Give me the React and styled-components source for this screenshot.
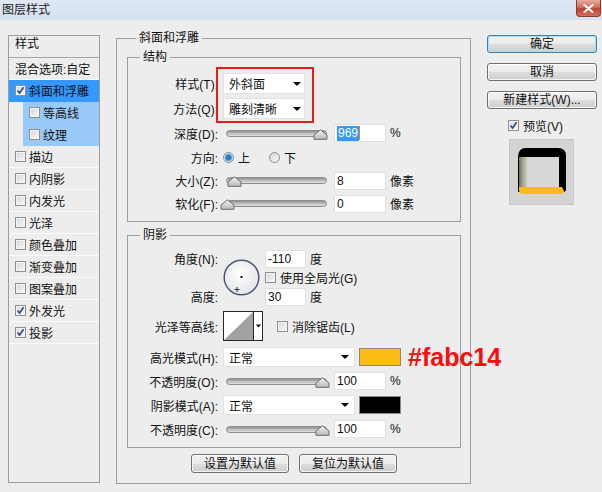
import React from 'react'
import styled, { createGlobalStyle } from 'styled-components'

const GlobalStyle = createGlobalStyle`
  html, body { margin: 0; padding: 0; background: #ededed; }
  body {
    font-family: "Liberation Sans", "Noto Sans CJK SC", sans-serif;
    font-size: 12px;
    color: #111;
  }
  * { box-sizing: border-box; }
`

const Window = styled.div`
  width: 602px;
  height: 492px;
  overflow: hidden;
  background: #ededed;
  display: flex;
  flex-direction: column;
`

const TitleBar = styled.div`
  height: 20px;
  flex: none;
  display: flex;
  justify-content: space-between;
  align-items: flex-start;
  background: linear-gradient(#dfe8f4, #d5e1ef);
`

const Title = styled.span`
  padding: 3px 0 0 2px;
  line-height: 14px;
  font-size: 12px;
  color: #1a1a1a;
`

const CloseButton = styled.div`
  width: 25px;
  height: 17px;
  margin-right: 1px;
  border: 1px solid #8b3b33;
  border-top: none;
  border-radius: 0 0 4px 4px;
  background: linear-gradient(#e9ab9e, #d26c5d 45%, #c1402f 55%, #d46d5c);
  display: flex;
  align-items: center;
  justify-content: center;
`

const Body = styled.div`
  flex: 1;
  display: flex;
  align-items: flex-start;
  gap: 16px;
  padding: 11px 0 0 8px;
`

// ---- left list of styles
const StyleList = styled.div`
  width: 92px;
  height: 448px;
  margin-top: 4px;
  border: 1px solid #9c9c9c;
  display: flex;
  flex-direction: column;
`

const ListHead = styled.div`
  height: 22px;
  padding: 1px 0 0 6px;
  line-height: 15px;
  border-bottom: 1px solid #a6a6a6;
`

const ListItem = styled.div`
  height: 22px;
  flex: none;
  display: flex;
  align-items: center;
  gap: 3px;
  margin-left: ${p => (p.$level ? 14 : 0)}px;
  padding-left: 6px;
  background: ${p => (p.$tone === 'active' ? '#3399ff' : p.$tone === 'sub' ? '#99c9f7' : 'transparent')};
  border-bottom: 1px solid ${p => (p.$tone ? 'transparent' : '#fbfbfb')};
`

const Box = styled.span`
  width: 11px;
  height: 11px;
  flex: none;
  border: 1px solid #8f8f8f;
  background: linear-gradient(135deg, #d6d6d6, #f9f9f9);
  box-shadow: inset 0 0 0 1px #f4f4f4;
  display: inline-flex;
  align-items: center;
  justify-content: center;
`

const Check = ({ on }) => (
  <Box>
    {on && (
      <svg width="9" height="9" viewBox="0 0 9 9">
        <path d="M1.5 4.5 L3.6 7 L7.6 1.3" fill="none" stroke="#3a4f9c" strokeWidth="1.8" />
      </svg>
    )}
  </Box>
)

// ---- central panel
const Group = styled.fieldset`
  margin: ${p => p.$mt || 0}px 0 0 0;
  min-width: 0;
  border: 1px solid #9d9d9d;
  padding: ${p => p.$pad};
  height: ${p => p.$h}px;
  width: ${p => (p.$w ? p.$w + 'px' : 'auto')};
  flex: none;
  display: flex;
  flex-direction: column;
`

const Legend = styled.legend`
  margin-left: ${p => p.$indent}px;
  padding: 0 3px;
  line-height: 14px;
  font-size: 12px;
`

const Row = styled.div`
  height: ${p => p.$h}px;
  margin-top: ${p => p.$mt || 0}px;
  flex: none;
  display: flex;
  align-items: center;
  white-space: nowrap;
`

const Label = styled.span`
  width: 90px;
  flex: none;
  text-align: right;
  margin-right: 5px;
  white-space: nowrap;
`

const MarkedRows = styled.div`
  position: relative;
  display: flex;
  flex-direction: column;
`

const RedMark = styled.div`
  position: absolute;
  left: 88px;
  top: -4px;
  width: 98px;
  height: 56px;
  border: 2px solid #ec1b1b;
  pointer-events: none;
`

const Select = styled.div`
  width: ${p => p.$w}px;
  height: ${p => p.$h}px;
  flex: none;
  background: #fff;
  border: 1px solid #e3e3e3;
  display: flex;
  align-items: center;
  justify-content: space-between;
  padding: 0 ${p => p.$pr}px 0 5px;
`

const DropArrow = styled.span`
  width: 0;
  height: 0;
  border-left: 4px solid transparent;
  border-right: 4px solid transparent;
  border-top: 4px solid #000;
`

const Track = styled.div`
  position: relative;
  width: 101px;
  height: 7px;
  margin-left: 3px;
  flex: none;
  border: 1px solid #8d8d8d;
  border-radius: 4px;
  background: linear-gradient(#8f8f8f, #c6c6c6 60%, #dedede);
`

const Thumb = styled.svg`
  position: absolute;
  top: -2px;
  left: ${p => p.$at - 8}px;
`

const Slider = ({ at }) => (
  <Track>
    <Thumb $at={at} width="15" height="11" viewBox="0 0 15 11">
      <defs>
        <linearGradient id="thumbFill" x1="0" y1="0" x2="0" y2="1">
          <stop offset="0" stopColor="#f4f4f4" />
          <stop offset="1" stopColor="#b9b9b9" />
        </linearGradient>
      </defs>
      <path d="M7.5 0.8 L14 6 V10.3 H1 V6 Z" fill="url(#thumbFill)" stroke="#6c6c6c" strokeWidth="1" strokeLinejoin="round" />
    </Thumb>
  </Track>
)

const NumField = styled.div`
  width: ${p => p.$w}px;
  height: 18px;
  flex: none;
  margin-left: ${p => p.$ml || 0}px;
  background: #fff;
  border: 1px solid #e0e0e0;
  padding-left: 2px;
  display: flex;
  align-items: center;
`

const Highlight = styled.span`
  background: #3399ff;
  color: #fff;
  line-height: 15px;
  padding: 0 1px;
`

const TextCaret = styled.span`
  width: 1px;
  height: 14px;
  background: #d48a10;
`

const Unit = styled.span`
  margin-left: 4px;
`

const Radio = styled.span`
  width: 11px;
  height: 11px;
  flex: none;
  border-radius: 50%;
  border: 1px solid #8a8a8a;
  background: ${p =>
    p.$on
      ? 'radial-gradient(circle, #1d6bb6 0, #2f86d0 2.5px, #7bb9e6 3.5px, #eef5fb 4.5px)'
      : 'linear-gradient(135deg, #d4d4d4, #fbfbfb)'};
`

const Option = styled.span`
  display: inline-flex;
  align-items: center;
  gap: 4px;
  margin-right: ${p => p.$mr || 0}px;
`

const AngleGrid = styled.div`
  display: grid;
  grid-template-columns: 90px 37px auto;
  grid-template-rows: repeat(3, 19px);
  column-gap: 5px;
  margin-top: 7px;
  flex: none;
`

const Cell = styled.div`
  grid-row: ${p => p.$row};
  grid-column: ${p => p.$col};
  display: flex;
  align-items: center;
  justify-content: ${p => (p.$end ? 'flex-end' : 'flex-start')};
  white-space: nowrap;
`

const Dial = styled.svg`
  grid-row: 1 / 4;
  grid-column: 2;
  align-self: center;
`

const Swatch = styled.span`
  width: 42px;
  height: 18px;
  flex: none;
  margin-left: 4px;
  border: 1px solid #8a8a8a;
  background: ${p => p.$color};
`

const Annotation = styled.span`
  margin-left: 7px;
  font-family: "Liberation Sans", sans-serif;
  font-weight: bold;
  font-size: 25px;
  line-height: 24px;
  color: #ff0a0a;
  white-space: nowrap;
`

const ButtonBar = styled.div`
  margin-top: 6px;
  display: flex;
  justify-content: center;
  gap: 10px;
  flex: none;
`

const PushButton = styled.button`
  width: ${p => p.$w}px;
  height: ${p => p.$h}px;
  padding: 0;
  flex: none;
  font: inherit;
  font-size: 12px;
  line-height: 14px;
  color: #111;
  border: 1px solid ${p => (p.$focus ? '#3c7fb1' : '#707070')};
  border-radius: 3px;
  background: linear-gradient(#f2f2f2 0%, #ebebeb 50%, #dddddd 51%, #cfcfcf 100%);
  box-shadow: inset 0 0 0 1px ${p => (p.$focus ? '#a9dcf7' : 'rgba(255,255,255,0.75)')};
`

// ---- right column
const SideColumn = styled.div`
  width: 110px;
  margin-top: 4px;
  display: flex;
  flex-direction: column;
  gap: 10px;
`

const PreviewToggle = styled.label`
  height: 12px;
  padding-left: 21px;
  display: flex;
  align-items: center;
  gap: 4px;
`

const PreviewBox = styled.div`
  width: 65px;
  height: 66px;
  margin: -2px 0 0 22px;
  background: #d4d4d4;
  border: 1px solid #c6c6c6;
  padding: 8px 0 0 8px;
`

const styleItems = [
  { name: '描边' },
  { name: '内阴影' },
  { name: '内发光' },
  { name: '光泽' },
  { name: '颜色叠加' },
  { name: '渐变叠加' },
  { name: '图案叠加' },
  { name: '外发光', on: true },
  { name: '投影', on: true },
]

const App = () => {
  return (
    <Window>
      <GlobalStyle />
      <TitleBar>
        <Title>图层样式</Title>
        <CloseButton>
          <svg width="11" height="9" viewBox="0 0 11 9">
            <path d="M1.5 1 L9.5 8 M9.5 1 L1.5 8" stroke="#fff" strokeWidth="2.2" strokeLinecap="round" />
          </svg>
        </CloseButton>
      </TitleBar>

      <Body>
        <StyleList>
          <ListHead>样式</ListHead>
          <ListItem>混合选项:自定</ListItem>
          <ListItem $tone="active">
            <Check on />
            斜面和浮雕
          </ListItem>
          <ListItem $level={1} $tone="sub">
            <Check />
            等高线
          </ListItem>
          <ListItem $level={1} $tone="sub">
            <Check />
            纹理
          </ListItem>
          {styleItems.map(item => (
            <ListItem key={item.name}>
              <Check on={item.on} />
              {item.name}
            </ListItem>
          ))}
        </StyleList>

        <Group $w={355} $h={453} $pad="5px 9px 0 10px">
          <Legend $indent={9}>斜面和浮雕</Legend>

          <Group $h={172} $pad="7px 0 0 0">
            <Legend $indent={12}>结构</Legend>
            <MarkedRows>
              <Row $h={25}>
                <Label>样式(T):</Label>
                <Select $w={82} $h={21} $pr={3}>
                  外斜面
                  <DropArrow />
                </Select>
              </Row>
              <Row $h={25}>
                <Label>方法(Q):</Label>
                <Select $w={82} $h={21} $pr={3}>
                  雕刻清晰
                  <DropArrow />
                </Select>
              </Row>
              <RedMark />
            </MarkedRows>
            <Row $h={24}>
              <Label>深度(D):</Label>
              <Slider at={94} />
              <NumField $w={52} $ml={7}>
                <Highlight>969</Highlight>
                <TextCaret />
              </NumField>
              <Unit>%</Unit>
            </Row>
            <Row $h={24}>
              <Label>方向:</Label>
              <Option $mr={19}>
                <Radio $on />上
              </Option>
              <Option>
                <Radio />下
              </Option>
            </Row>
            <Row $h={23}>
              <Label>大小(Z):</Label>
              <Slider at={8} />
              <NumField $w={52} $ml={7}>8</NumField>
              <Unit>像素</Unit>
            </Row>
            <Row $h={23}>
              <Label>软化(F):</Label>
              <Slider at={1} />
              <NumField $w={52} $ml={7}>0</NumField>
              <Unit>像素</Unit>
            </Row>
          </Group>

          <Group $mt={6} $h={220} $pad="0">
            <Legend $indent={12}>阴影</Legend>
            <AngleGrid>
              <Cell $row={1} $col={1} $end>
                角度(N):
              </Cell>
              <Dial width="37" height="37" viewBox="0 0 37 37">
                <defs>
                  <radialGradient id="dialFill" cx="45%" cy="40%" r="60%">
                    <stop offset="0" stopColor="#ffffff" />
                    <stop offset="1" stopColor="#e4e5ea" />
                  </radialGradient>
                </defs>
                <circle cx="18.5" cy="18.5" r="17.3" fill="url(#dialFill)" stroke="#4a5678" strokeWidth="1.5" />
                <rect x="17.5" y="17" width="2" height="2" fill="#111" />
                <path d="M11.5 30.5 H16.5 M14 28 V33" stroke="#333" strokeWidth="1" />
              </Dial>
              <Cell $row={1} $col={3}>
                <NumField $w={41}>-110</NumField>
                <Unit>度</Unit>
              </Cell>
              <Cell $row={2} $col={3}>
                <Option>
                  <Check />
                  使用全局光(G)
                </Option>
              </Cell>
              <Cell $row={3} $col={1} $end>
                高度:
              </Cell>
              <Cell $row={3} $col={3}>
                <NumField $w={41}>30</NumField>
                <Unit>度</Unit>
              </Cell>
            </AngleGrid>

            <Row $h={30} $mt={5}>
              <Label>光泽等高线:</Label>
              <svg width="40" height="30" viewBox="0 0 40 30">
                <rect x="0.5" y="0.5" width="39" height="29" fill="#fff" stroke="#262626" />
                <polygon points="1,29 30,1 30,29" fill="#a2a2a2" />
                <line x1="30.5" y1="0.5" x2="30.5" y2="29.5" stroke="#262626" />
                <polygon points="33,13.5 38,13.5 35.5,16.5" fill="#000" />
              </svg>
              <Option style={{ marginLeft: 14 }}>
                <Check />
                消除锯齿(L)
              </Option>
            </Row>
            <Row $h={24} $mt={4}>
              <Label>高光模式(H):</Label>
              <Select $w={132} $h={20} $pr={5}>
                正常
                <DropArrow />
              </Select>
              <Swatch $color="#fabc14" />
              <Annotation>#fabc14</Annotation>
            </Row>
            <Row $h={24}>
              <Label>不透明度(O):</Label>
              <Slider at={96} />
              <NumField $w={52} $ml={7}>100</NumField>
              <Unit>%</Unit>
            </Row>
            <Row $h={24}>
              <Label>阴影模式(A):</Label>
              <Select $w={132} $h={20} $pr={5}>
                正常
                <DropArrow />
              </Select>
              <Swatch $color="#000" />
            </Row>
            <Row $h={24}>
              <Label>不透明度(C):</Label>
              <Slider at={96} />
              <NumField $w={52} $ml={7}>100</NumField>
              <Unit>%</Unit>
            </Row>
          </Group>

          <ButtonBar>
            <PushButton $w={98} $h={19}>设置为默认值</PushButton>
            <PushButton $w={98} $h={19}>复位为默认值</PushButton>
          </ButtonBar>
        </Group>

        <SideColumn>
          <PushButton $w={110} $h={18} $focus>确定</PushButton>
          <PushButton $w={110} $h={18}>取消</PushButton>
          <PushButton $w={110} $h={18}>新建样式(W)...</PushButton>
          <PreviewToggle>
            <Check on />
            预览(V)
          </PreviewToggle>
          <PreviewBox>
            <svg width="48" height="46" viewBox="0 0 48 46">
              <defs>
                <linearGradient id="pvSide" x1="0" y1="0" x2="1" y2="0">
                  <stop offset="0" stopColor="#6c6d5e" />
                  <stop offset="0.5" stopColor="#a7a892" />
                  <stop offset="1" stopColor="#c9c9b9" />
                </linearGradient>
              </defs>
              <path d="M0 9 Q0 0 8 0 H40 Q48 0 48 8 V41 Q48 44 45 44 H0 Z" fill="#000" />
              <rect x="1" y="9" width="8" height="31" fill="url(#pvSide)" />
              <rect x="9" y="9" width="32" height="30" fill="#d8d8d8" />
              <path d="M1 39 H44 L46 43 Q46 46 42 46 H6 Q1 46 1 42 Z" fill="#fabc14" />
            </svg>
          </PreviewBox>
        </SideColumn>
      </Body>
    </Window>
  )
}

export default App
